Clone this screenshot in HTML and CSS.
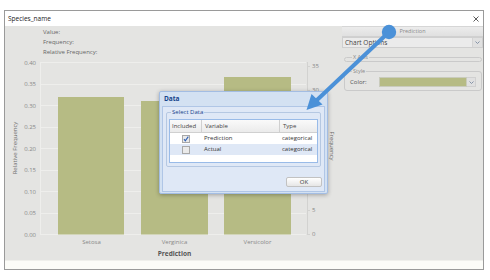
FILE: index.html
```html
<!DOCTYPE html>
<html lang="en">
<head>
    <meta charset="UTF-8">
    <meta name="viewport" content="width=device-width, initial-scale=1.0">
    <title>Species_name</title>
    <link rel="stylesheet" href="styles.css">
</head>
<body>
    <div class="window">
        <div class="titlebar">
            <span class="title">Species_name</span>
            <svg class="close" width="6" height="6" viewBox="0 0 6 6"><path d="M0.5 0.5L5.5 5.5M5.5 0.5L0.5 5.5"/></svg>
        </div>
        <div class="content">
            <div class="chart-pane">
                <div class="info">
                    <div>Value:</div>
                    <div>Frequency:</div>
                    <div>Relative Frequency:</div>
                </div>
                <svg class="chart" width="337" height="204" viewBox="0 0 337 204">
                    <!-- grid -->
                    <g class="grid">
                        <line x1="35" x2="301" y1="6.5" y2="6.5"/>
                        <line x1="35" x2="301" y1="28.5" y2="28.5"/>
                        <line x1="35" x2="301" y1="49.5" y2="49.5"/>
                        <line x1="35" x2="301" y1="71.5" y2="71.5"/>
                        <line x1="35" x2="301" y1="92.5" y2="92.5"/>
                        <line x1="35" x2="301" y1="114.5" y2="114.5"/>
                        <line x1="35" x2="301" y1="135.5" y2="135.5"/>
                        <line x1="35" x2="301" y1="157.5" y2="157.5"/>
                        <line x1="35" x2="301" y1="178.5" y2="178.5"/>
                        <line x1="35.5" x2="35.5" y1="6" y2="179"/>
                    </g>
                    <g class="ylabels">
                        <text x="31" y="6.5">0.40</text>
                        <text x="31" y="28">0.35</text>
                        <text x="31" y="49.5">0.30</text>
                        <text x="31" y="71">0.25</text>
                        <text x="31" y="92.5">0.20</text>
                        <text x="31" y="114">0.15</text>
                        <text x="31" y="135.5">0.10</text>
                        <text x="31" y="157">0.05</text>
                        <text x="31" y="178.5">0.00</text>
                    </g>
                    <g class="bars">
                        <rect x="53" y="41" width="66" height="137.5"/>
                        <rect x="136" y="45" width="67" height="133.5"/>
                        <rect x="219" y="21" width="67" height="157.5"/>
                    </g>
                    <g class="raxis">
                        <line x1="302.5" x2="302.5" y1="6" y2="179"/>
                        <path d="M302 10.5h3M302 34.5h3M302 58.5h3M302 82.5h3M302 106.5h3M302 130.5h3M302 154.5h3M302 178.5h3"/>
                    </g>
                    <g class="rlabels">
                        <text x="307" y="10">35</text>
                        <text x="307" y="34">30</text>
                        <text x="307" y="58">25</text>
                        <text x="307" y="82">20</text>
                        <text x="307" y="106">15</text>
                        <text x="307" y="130">10</text>
                        <text x="307" y="154">5</text>
                        <text x="307" y="178">0</text>
                    </g>
                    <g class="xlabels">
                        <text x="86.5" y="186">Setosa</text>
                        <text x="169.5" y="186">Verginica</text>
                        <text x="252.5" y="186">Versicolor</text>
                    </g>
                    <text class="xtitle" x="169.5" y="197.5">Prediction</text>
                    <text class="ytitle" transform="translate(11.5 92) rotate(-90)">Relative Frequency</text>
                    <text class="ytitle" transform="translate(325 90) rotate(90)">Frequency</text>
                </svg>
            </div>
            <div class="side">
                <div class="tab">Prediction</div>
                <div class="select">
                    <span class="select-text">Chart Options</span>
                    <span class="select-btn"><svg width="5" height="3" viewBox="0 0 5 3"><path d="M0.5 0.5L2.5 2.5L4.5 0.5"/></svg></span>
                </div>
                <fieldset class="group collapsed">
                    <legend>X Axis</legend>
                </fieldset>
                <fieldset class="group style">
                    <legend>Style</legend>
                    <div class="color-row">
                        <span class="color-label">Color:</span>
                        <span class="swatch"></span>
                        <span class="swatch-btn"><svg width="5" height="3" viewBox="0 0 5 3"><path d="M0.5 0.5L2.5 2.5L4.5 0.5"/></svg></span>
                    </div>
                </fieldset>
            </div>
        </div>
        <div class="statusbar"></div>

        <div class="dialog">
            <div class="dialog-head">Data</div>
            <div class="dialog-body">
                <fieldset class="data-set">
                    <legend>Select Data</legend>
                    <div class="grid-table">
                        <div class="grid-row grid-head">
                            <span class="c-inc">Included</span>
                            <span class="c-var">Variable</span>
                            <span class="c-type">Type</span>
                        </div>
                        <div class="grid-row">
                            <span class="c-inc"><svg class="check" width="8" height="8" viewBox="0 0 8 8"><rect x="0.5" y="0.5" width="7" height="7"/><path class="tick" d="M2 4.2L3.3 5.8L6.3 1.6"/></svg></span>
                            <span class="c-var">Prediction</span>
                            <span class="c-type">categorical</span>
                        </div>
                        <div class="grid-row alt">
                            <span class="c-inc"><svg class="check" width="8" height="8" viewBox="0 0 8 8"><rect x="0.5" y="0.5" width="7" height="7"/></svg></span>
                            <span class="c-var">Actual</span>
                            <span class="c-type">categorical</span>
                        </div>
                    </div>
                </fieldset>
                <div class="dialog-foot">
                    <button class="btn">OK</button>
                </div>
            </div>
        </div>
    </div>

    <svg class="pointer" width="490" height="280" viewBox="0 0 490 280">
        <line x1="389" y1="32" x2="317" y2="100"/>
        <circle cx="389" cy="32" r="7.2"/>
        <polygon points="306.5,110 311.5,94 322.5,104.5"/>
    </svg>
</body>
</html>
```

FILE: styles.css
```css
body {
    margin: 0;
    background: #fff;
    font-family: "Open Sans", "DejaVu Sans", sans-serif;
    color: #444;
}
.window {
    position: relative;
    width: 478px;
    height: 258px;
    margin: 10px 0 0 4px;
    border: 1px solid #9a9a9a;
    background: #e4e4e2;
}
.titlebar {
    height: 15px;
    background: #fff;
    display: flex;
    align-items: center;
    justify-content: space-between;
    padding: 0 4px 0 3px;
    font-size: 6.5px;
    color: #222;
}
.close path {
    stroke: #333;
    stroke-width: 0.8;
}
.content {
    display: flex;
    height: 234px;
}
.chart-pane {
    width: 337px;
}
.info {
    height: 30px;
    box-sizing: border-box;
    padding: 1px 0 0 38px;
    font-size: 6px;
    line-height: 10px;
    color: #666;
}
.chart {
    display: block;
}
.grid line {
    stroke: #eeeeec;
    stroke-width: 1;
}
.ylabels text {
    font-size: 6px;
    fill: #888;
    text-anchor: end;
    dominant-baseline: central;
}
.bars rect {
    fill: #b6bb84;
}
.raxis line,
.raxis path {
    stroke: #d2d2d0;
    stroke-width: 1;
}
.rlabels text {
    font-size: 6px;
    fill: #888;
    dominant-baseline: central;
}
.xlabels text {
    font-size: 6px;
    fill: #888;
    text-anchor: middle;
    dominant-baseline: central;
}
.xtitle {
    font-size: 6.5px;
    font-weight: bold;
    fill: #555;
    text-anchor: middle;
    dominant-baseline: central;
}
.ytitle {
    font-size: 6px;
    fill: #6e6e6e;
    text-anchor: middle;
}
.side {
    width: 141px;
}
.tab {
    height: 11px;
    box-sizing: border-box;
    border-top: 1px solid #d6d6d6;
    border-bottom: 1px solid #d0d0d0;
    background: linear-gradient(#ececec, #e0e0e0);
    text-align: center;
    font-size: 5.5px;
    line-height: 9px;
    color: #8a8a8a;
}
.select {
    display: flex;
    height: 11px;
    box-sizing: border-box;
    border: 1px solid #cfcfcf;
    background: #ebebeb;
    font-size: 6.5px;
    color: #444;
}
.select-text {
    flex: 1;
    padding-left: 2px;
    line-height: 9px;
}
.select-btn,
.swatch-btn {
    width: 9px;
    display: flex;
    align-items: center;
    justify-content: center;
    background: #e0e0e0;
    border-left: 1px solid #d4d4d4;
}
.select-btn path,
.swatch-btn path {
    fill: none;
    stroke: #7a8aa0;
    stroke-width: 0.9;
}
.group {
    margin: 6px 1px 0 2px;
    padding: 0 5px;
    border: 1px solid #cacaca;
    border-radius: 3px;
    min-width: 0;
}
.group legend {
    font-size: 5.5px;
    line-height: 7px;
    padding: 0 1px;
    margin-left: 2px;
    color: #8a8a8a;
}
.group.style {
    margin-top: 6px;
    padding: 2px 5px 3px;
}
.color-row {
    display: flex;
    align-items: center;
    height: 10px;
    font-size: 6px;
    color: #555;
}
.color-label {
    width: 29px;
}
.swatch {
    width: 88px;
    height: 10px;
    box-sizing: border-box;
    background: #b6bb84;
    border: 1px solid #c9cbbc;
}
.swatch-btn {
    height: 10px;
    box-sizing: border-box;
    border: 1px solid #d0d0d0;
    border-left: none;
}
.statusbar {
    height: 9px;
    background: #fcfcf8;
    border-top: 1px solid #f0f0ec;
    box-sizing: border-box;
}
.dialog {
    position: absolute;
    left: 154px;
    top: 80px;
    width: 167px;
    height: 101px;
    border: 1px solid #a3bde3;
    border-radius: 2px;
    background: #d3e1f2;
    box-shadow: 0 1px 4px rgba(0, 0, 0, 0.3);
}
.dialog-head {
    height: 14px;
    line-height: 14px;
    padding-left: 4px;
    font-size: 6.5px;
    font-weight: bold;
    color: #15428b;
}
.dialog-body {
    margin: 0 2px;
    height: 84px;
    border: 1px solid #b0c6e6;
    background: #dfe8f6;
}
.data-set {
    margin: 2px 3px 0 3px;
    padding: 3px 2px;
    border: 1px solid #b5c8e2;
    border-radius: 2px;
    min-width: 0;
}
.data-set legend {
    font-size: 6px;
    line-height: 7px;
    padding: 0 1px;
    margin-left: 2px;
    color: #15428b;
}
.grid-table {
    height: 44px;
    box-sizing: border-box;
    border: 1px solid #99bbe8;
    background: #fff;
    font-size: 6px;
    color: #333;
}
.grid-row {
    display: flex;
    height: 11px;
    line-height: 11px;
}
.grid-head {
    height: 12px;
    line-height: 12px;
    background: linear-gradient(#fafafa, #ebebeb);
    border-bottom: 1px solid #d0d0d0;
    color: #444;
}
.grid-row.alt {
    background: #dfe8f6;
}
.c-inc {
    width: 31px;
    display: flex;
    align-items: center;
    justify-content: center;
}
.c-var {
    width: 78px;
    padding-left: 3px;
    box-sizing: border-box;
}
.c-type {
    flex: 1;
    padding-left: 3px;
}
.grid-head span + span {
    border-left: 1px solid #d0d0d0;
}
.grid-head .c-inc {
    justify-content: flex-start;
    padding-left: 2px;
    box-sizing: border-box;
}
.check rect {
    fill: #eaeaea;
    stroke: #a8a8a8;
    stroke-width: 1;
}
.check .tick {
    fill: none;
    stroke: #2f5fb3;
    stroke-width: 1.1;
}
.dialog-foot {
    display: flex;
    justify-content: flex-end;
    padding: 10px 2px 0 0;
}
.btn {
    width: 36px;
    height: 10px;
    padding: 0;
    border: 1px solid #c2c2c2;
    border-radius: 2px;
    background: linear-gradient(#ffffff, #e6e6e6);
    font-family: inherit;
    font-size: 6px;
    line-height: 8px;
    color: #333;
}
.pointer {
    position: absolute;
    left: 0;
    top: 0;
    pointer-events: none;
}
.pointer line {
    stroke: #4b91d8;
    stroke-width: 4;
    stroke-linecap: round;
}
.pointer circle,
.pointer polygon {
    fill: #4b91d8;
}
```
